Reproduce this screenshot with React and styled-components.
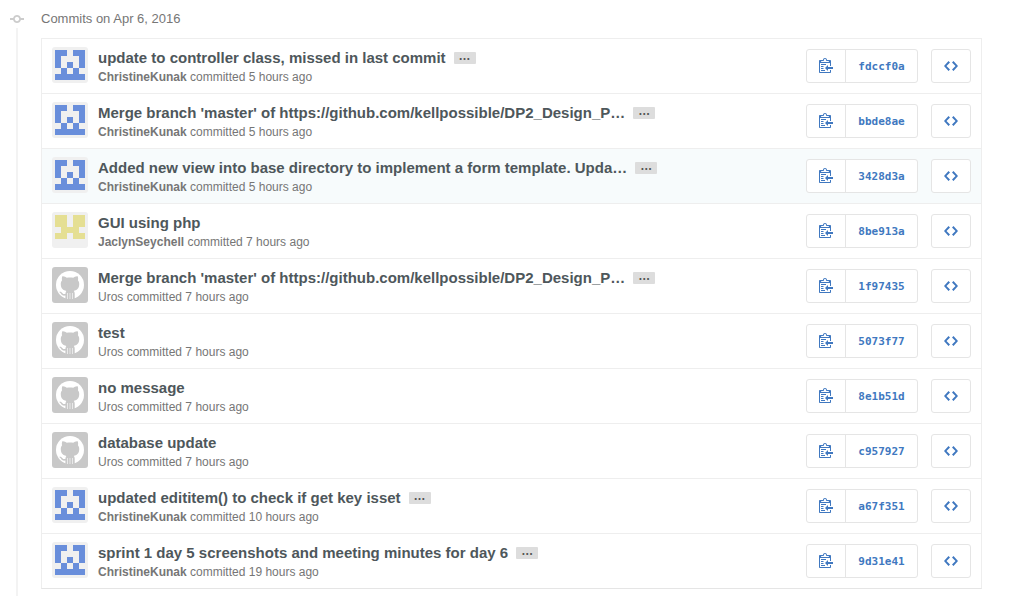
import React from "react";
import styled, { createGlobalStyle } from "styled-components";

const GlobalStyle = createGlobalStyle`
  * { box-sizing: border-box; }
  body {
    margin: 0;
    background: #fff;
    color: #767676;
    font: 12px/18px "Liberation Sans", Arial, sans-serif;
  }
`;

const Page = styled.main`
  padding: 10px 29px 0 16px;
`;

const Timeline = styled.section`
  border-left: 2px solid #f3f3f3;
  padding: 0 0 16px 23px;
`;

const GroupTitle = styled.h2`
  display: flex;
  align-items: center;
  margin: 0 0 10px -32px;
  height: 18px;
  font-size: 13px;
  font-weight: 400;
  line-height: 18px;
`;

const Marker = styled.span`
  display: flex;
  align-items: center;
  width: 16px;
  height: 18px;
  margin-right: 16px;
  padding-left: 1px;
  background: #fff;
  color: #ccc;
`;

const List = styled.ol`
  margin: 0;
  padding: 0;
  list-style: none;
  border: 1px solid #eee;
  border-bottom-color: #e5e5e5;
`;

const Row = styled.li`
  display: flex;
  align-items: flex-start;
  padding: 8px 10px;
  height: 55px;
  background: ${(p) => (p.$active ? "#f7fbfc" : "#fff")};
  border-bottom: 1px solid #eee;
  &:last-child { height: 54px; border-bottom: 0; }
`;

const AvatarSvg = styled.svg`
  flex: none;
  width: 36px;
  height: 36px;
  margin-right: 10px;
  border-radius: 3px;
  background: ${(p) => p.$bg};
`;

const Body = styled.div`
  flex: 1;
  min-width: 0;
`;

const TitleLine = styled.p`
  display: flex;
  align-items: center;
  margin: 0;
  height: 21px;
  white-space: nowrap;
`;

const TitleLink = styled.a`
  color: #4e575b;
  font-size: 15px;
  font-weight: 700;
  line-height: 21px;
  text-decoration: none;
`;

const Expander = styled.button`
  display: flex;
  align-items: center;
  width: 22px;
  height: 12px;
  margin-left: 8px;
  padding: 0 5px 4px;
  border: 0;
  border-radius: 1px;
  background: #ddd;
  color: #555;
  font: 700 12px/6px "Liberation Sans", Arial, sans-serif;
`;

const Meta = styled.p`
  margin: 0;
  line-height: 18px;
`;

const Author = styled.a`
  color: #767676;
  font-weight: 700;
  text-decoration: none;
`;

const Actions = styled.div`
  display: flex;
  gap: 13px;
  margin-top: 2px;
`;

const Group = styled.div`
  display: flex;
  width: 112px;
  height: 34px;
  border: 1px solid #e5e5e5;
  border-radius: 3px;
  background: #fff;
`;

const CopyButton = styled.button`
  display: flex;
  align-items: center;
  justify-content: center;
  width: 39px;
  padding: 0 0 2px;
  border: 0;
  border-right: 1px solid #e5e5e5;
  background: none;
  color: #4078c0;
`;

const HashLink = styled.a`
  flex: 1;
  padding-top: 1px;
  color: #4078c0;
  font: 700 11px/31px "DejaVu Sans Mono", monospace;
  text-align: center;
  text-decoration: none;
`;

const BrowseLink = styled.a`
  display: flex;
  align-items: center;
  justify-content: center;
  width: 40px;
  height: 34px;
  border: 1px solid #e5e5e5;
  border-radius: 3px;
  background: #fff;
  color: #4078c0;
`;

const ICONS = {
  commit:
    "M10.86 7c-.45-1.72-2-3-3.86-3-1.86 0-3.41 1.28-3.86 3H0v2h3.14c.45 1.72 2 3 3.86 3 1.86 0 3.41-1.28 3.86-3H14V7h-3.14zM7 10.2c-1.22 0-2.2-.98-2.2-2.2 0-1.22.98-2.2 2.2-2.2 1.22 0 2.2.98 2.2 2.2 0 1.22-.98 2.2-2.2 2.2z",
  clippy:
    "M2 13h4v1H2v-1zm5-6H2v1h5V7zm2 3V8l-3 3 3 3v-2h5v-2H9zM4.5 9H2v1h2.5V9zM2 12h2.5v-1H2v1zm9 1h1v2c-.02.28-.11.52-.3.7-.19.18-.42.28-.7.3H1c-.55 0-1-.45-1-1V4c0-.55.45-1 1-1h3c0-1.11.89-2 2-2 1.11 0 2 .89 2 2h3c.55 0 1 .45 1 1v5h-1V6H1v9h10v-2zM2 5h8c0-.55-.45-1-1-1H8c-.55 0-1-.45-1-1s-.45-1-1-1-1 .45-1 1-.45 1-1 1H3c-.55 0-1 .45-1 1z",
  code: "M9.5 3L8 4.5 11.5 8 8 11.5 9.5 13 14 8 9.5 3zm-5 0L0 8l4.500 5L6 11.500 2.500 8 6 4.500 4.500 3z",
};

function Octicon({ name }) {
  return (
    <svg width="14" height="16" viewBox="0 0 14 16" fill="currentColor" aria-hidden="true">
      <path fillRule="evenodd" d={ICONS[name]} />
    </svg>
  );
}

const IDENTICONS = {
  ChristineKunak: { color: "#698edb", cells: ["11011", "10001", "10101", "01010", "11111"] },
  JaclynSeychell: { color: "#e5df93", cells: ["11011", "11011", "01110", "11011", "00000"] },
};

function Avatar({ author }) {
  const icon = IDENTICONS[author];
  if (icon) {
    return (
      <AvatarSvg $bg="#f0f0f0" viewBox="0 0 36 36" role="img" aria-label={author} shapeRendering="crispEdges">
        {icon.cells.flatMap((row, y) =>
          [...row].map((on, x) =>
            on === "1" ? (
              <rect key={`${x}-${y}`} x={3 + x * 6} y={3 + y * 6} width="6" height="6" fill={icon.color} />
            ) : null
          )
        )}
      </AvatarSvg>
    );
  }
  return (
    <AvatarSvg $bg="#c8c8c8" viewBox="0 0 36 36" role="img" aria-label={author}>
      <circle cx="18" cy="18" r="14" fill="#fff" />
      <path
        fill="#c8c8c8"
        d="M10.300 9.300C12 9 13.600 9.900 14.800 10.800C16.800 10.300 19.200 10.300 21.200 10.800C22.400 9.900 24 9 25.700 9.300C26.300 10.900 26.200 12.200 25.900 13.300C27 14.500 27.300 15.800 27.200 17.500C27 21.700 24.700 23.300 21.700 23.900C22.500 24.700 22.700 25.500 22.700 26.700V32H13.400V28.600C10.900 29 9.700 28.200 8.900 26.600C8.400 25.700 7.900 25.200 7.200 24.900C8.500 24.300 9.700 25 10.500 26.200C11.200 27.200 12.200 27.300 13.500 26.800C13.500 25.600 13.700 24.600 14.300 23.900C11.300 23.300 9 21.700 8.800 17.500C8.700 15.800 9 14.500 10.100 13.300C9.800 12.200 9.700 10.900 10.300 9.300Z"
      />
      <path stroke="#fff" strokeWidth="1" strokeOpacity="0.6" fill="none" d="M15.500 26v6M18 26v6M20.500 26v6" />
    </AvatarSvg>
  );
}

const COMMITS = [
  { title: "update to controller class, missed in last commit", more: true, author: "ChristineKunak", hours: 5, sha: "fdccf0a" },
  { title: "Merge branch 'master' of https://github.com/kellpossible/DP2_Design_P…", more: true, author: "ChristineKunak", hours: 5, sha: "bbde8ae" },
  { title: "Added new view into base directory to implement a form template. Upda…", more: true, author: "ChristineKunak", hours: 5, sha: "3428d3a", active: true },
  { title: "GUI using php", author: "JaclynSeychell", hours: 7, sha: "8be913a" },
  { title: "Merge branch 'master' of https://github.com/kellpossible/DP2_Design_P…", more: true, author: "Uros", hours: 7, sha: "1f97435" },
  { title: "test", author: "Uros", hours: 7, sha: "5073f77" },
  { title: "no message", author: "Uros", hours: 7, sha: "8e1b51d" },
  { title: "database update", author: "Uros", hours: 7, sha: "c957927" },
  { title: "updated edititem() to check if get key isset", more: true, author: "ChristineKunak", hours: 10, sha: "a67f351" },
  { title: "sprint 1 day 5 screenshots and meeting minutes for day 6", more: true, author: "ChristineKunak", hours: 19, sha: "9d31e41" },
];

function Commit({ commit }) {
  const { title, more, author, hours, sha, active } = commit;
  return (
    <Row $active={active}>
      <Avatar author={author} />
      <Body>
        <TitleLine>
          <TitleLink href={`#${sha}`}>{title}</TitleLink>
          {more && <Expander type="button">…</Expander>}
        </TitleLine>
        <Meta>
          {author === "Uros" ? author : <Author href={`#${author}`}>{author}</Author>} committed {hours} hours ago
        </Meta>
      </Body>
      <Actions>
        <Group>
          <CopyButton type="button" aria-label="Copy the full SHA">
            <Octicon name="clippy" />
          </CopyButton>
          <HashLink href={`#${sha}`}>{sha}</HashLink>
        </Group>
        <BrowseLink href={`#tree-${sha}`} aria-label="Browse the repository at this point">
          <Octicon name="code" />
        </BrowseLink>
      </Actions>
    </Row>
  );
}

export default function App() {
  return (
    <Page>
      <GlobalStyle />
      <Timeline>
        <GroupTitle>
          <Marker>
            <Octicon name="commit" />
          </Marker>
          Commits on Apr 6, 2016
        </GroupTitle>
        <List>
          {COMMITS.map((commit) => (
            <Commit key={commit.sha} commit={commit} />
          ))}
        </List>
      </Timeline>
    </Page>
  );
}
